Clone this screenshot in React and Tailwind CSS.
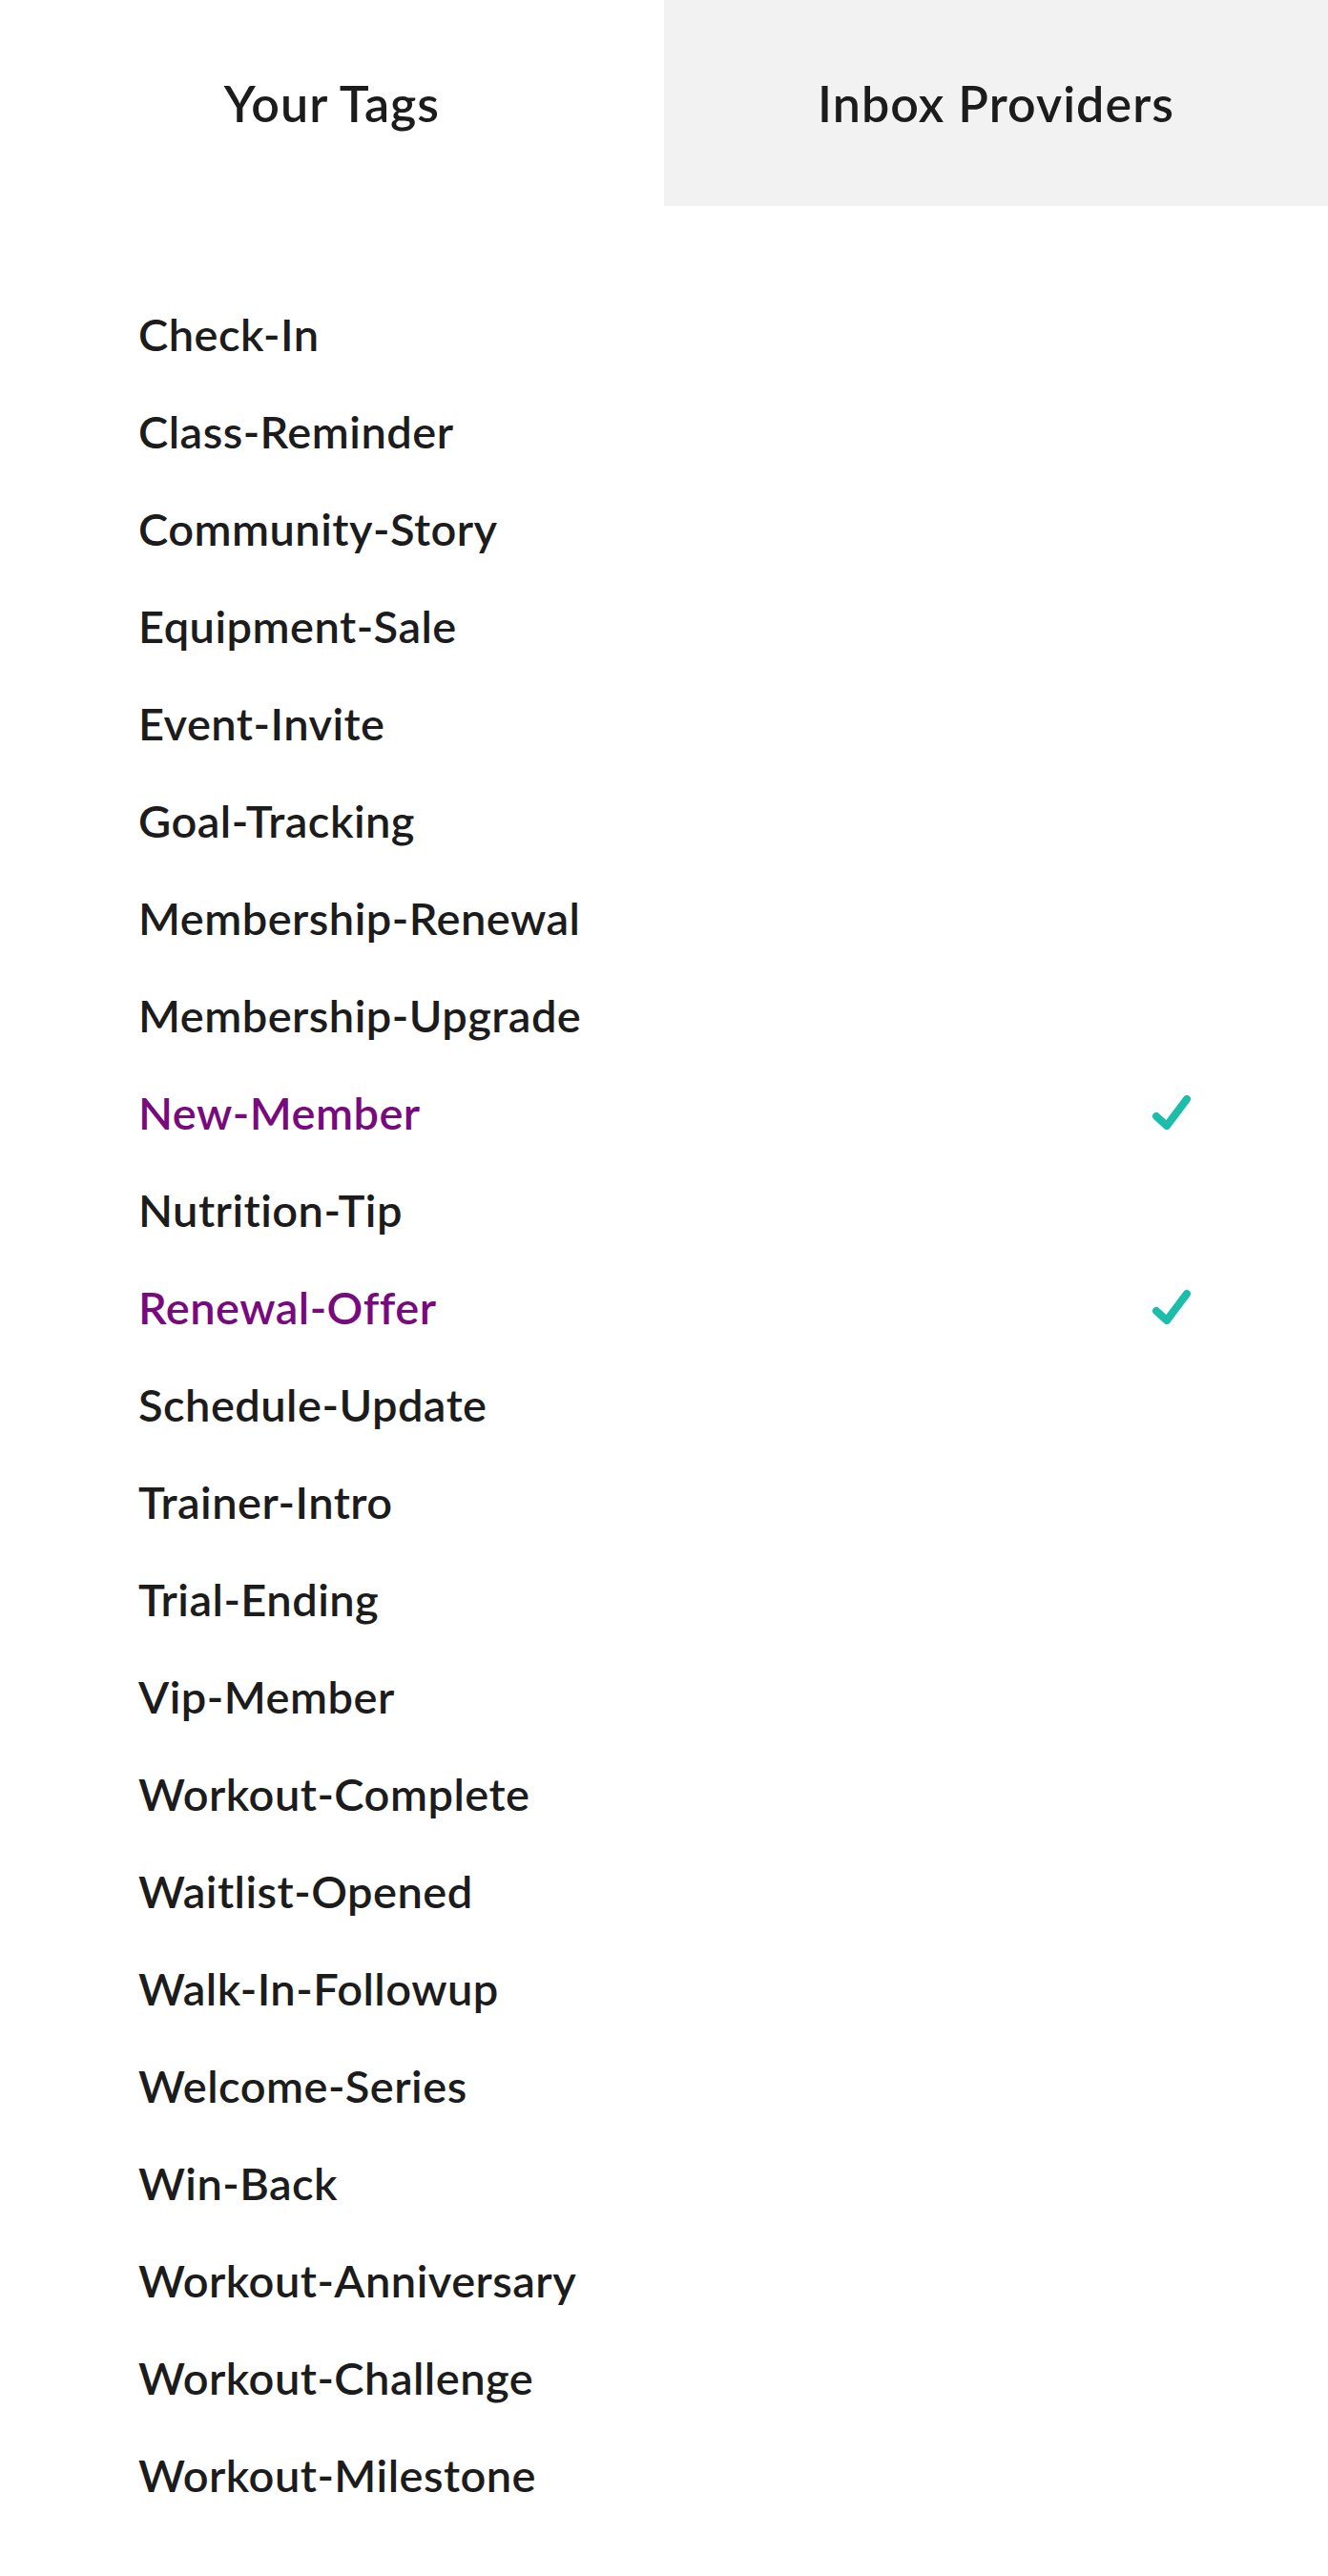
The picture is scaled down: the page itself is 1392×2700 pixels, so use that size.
const tags = [
  { name: 'Check-In' },
  { name: 'Class-Reminder' },
  { name: 'Community-Story' },
  { name: 'Equipment-Sale' },
  { name: 'Event-Invite' },
  { name: 'Goal-Tracking' },
  { name: 'Membership-Renewal' },
  { name: 'Membership-Upgrade' },
  { name: 'New-Member', selected: true },
  { name: 'Nutrition-Tip' },
  { name: 'Renewal-Offer', selected: true },
  { name: 'Schedule-Update' },
  { name: 'Trainer-Intro' },
  { name: 'Trial-Ending' },
  { name: 'Vip-Member' },
  { name: 'Workout-Complete' },
  { name: 'Waitlist-Opened' },
  { name: 'Walk-In-Followup' },
  { name: 'Welcome-Series' },
  { name: 'Win-Back' },
  { name: 'Workout-Anniversary' },
  { name: 'Workout-Challenge' },
  { name: 'Workout-Milestone' },
]

function Check() {
  return (
    <svg width="46" height="42" viewBox="0 0 46 42" fill="none">
      <polyline
        points="8,25 19,35 40,7"
        stroke="#1dbdac"
        strokeWidth="8"
        strokeLinecap="round"
        strokeLinejoin="round"
      />
    </svg>
  )
}

export default function App() {
  return (
    <div className="w-full min-h-screen bg-white text-[#1c1c1c] font-['Lato',sans-serif] [font-variant-ligatures:none]">
      {/* Tabs */}
      <div className="grid grid-cols-2 h-[216px]">
        <button className="flex items-center justify-center bg-white text-[52px] font-semibold tracking-[0.02em]">
          Your Tags
        </button>
        <button className="flex items-center justify-center bg-[#f2f2f2] text-[52px] font-semibold tracking-[0.02em]">
          Inbox Providers
        </button>
      </div>

      {/* Tag list */}
      <ul className="pt-[83px] pl-[145px] pr-[142px]">
        {tags.map((t) => (
          <li key={t.name} className="h-[102px] flex items-center justify-between">
            <span className={`text-[47px] font-semibold tracking-[0.01em] ${t.selected ? 'text-[#780a7e]' : ''}`}>
              {t.name}
            </span>
            {t.selected && <Check />}
          </li>
        ))}
      </ul>
    </div>
  )
}
